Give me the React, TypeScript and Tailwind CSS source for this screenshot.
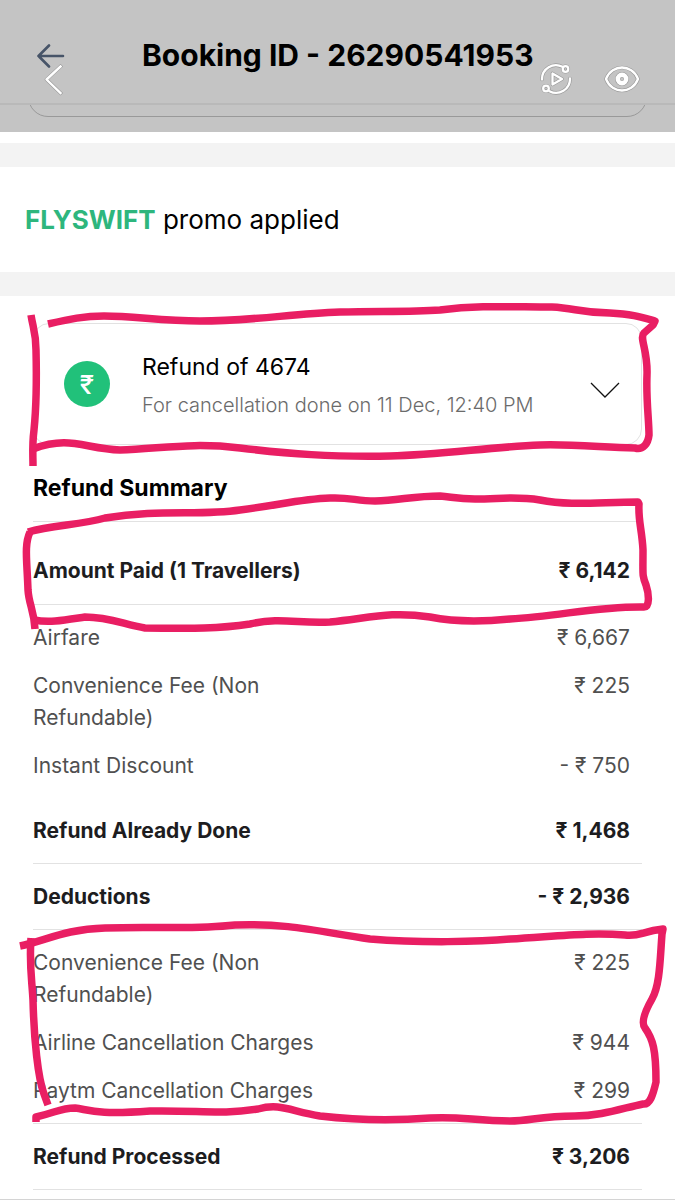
import React from "react";

type Row = { label: string; value: string; kind?: "total"; edge?: "first" | "last" };

const summaryRows: Row[] = [
  { label: "Airfare", value: "₹ 6,667", edge: "first" },
  { label: "Convenience Fee (Non Refundable)", value: "₹ 225" },
  { label: "Instant Discount", value: "- ₹ 750", edge: "last" },
  { label: "Refund Already Done", value: "₹ 1,468", kind: "total" },
  { label: "Deductions", value: "- ₹ 2,936", kind: "total" },
  { label: "Convenience Fee (Non Refundable)", value: "₹ 225", edge: "first" },
  { label: "Airline Cancellation Charges", value: "₹ 944" },
  { label: "Paytm Cancellation Charges", value: "₹ 299", edge: "last" },
];

function FeeRow({ row }: { row: Row }) {
  if (row.kind === "total") {
    return (
      <tr className="h-[66px] text-[#1d1d1f]">
        <th scope="row" className="border-b border-[#e2e2e2] text-left font-bold">{row.label}</th>
        <td className="border-b border-[#e2e2e2] pr-3 text-right font-bold">{row.value}</td>
      </tr>
    );
  }
  const pad = row.edge === "first" ? "pt-[17px] pb-2" : row.edge === "last" ? "pt-2 pb-4" : "py-2";
  return (
    <tr className="align-top text-[#505050]">
      <th scope="row" className={`w-1/2 text-left font-normal ${pad}`}>{row.label}</th>
      <td className={`pr-3 text-right ${pad}`}>{row.value}</td>
    </tr>
  );
}

function ReplayIcon() {
  const shapes = (
    <>
      <path d="M2 16.500A14 14 0 0 1 22.500 3.800" />
      <path d="M30 15.500A14 14 0 0 1 9.500 28.200" />
      <circle cx="25.500" cy="6" r="2.800" />
      <circle cx="6" cy="25.500" r="2.800" />
      <path d="M12.500 10.500V21.500L22 16Z" />
    </>
  );
  return (
    <svg viewBox="0 0 32 32" className="size-8" fill="none" strokeLinecap="round" strokeLinejoin="round" aria-hidden="true">
      <g stroke="#999" strokeWidth="3.600">{shapes}</g>
      <g stroke="#fff" strokeWidth="2.300">{shapes}</g>
    </svg>
  );
}

function EyeIcon() {
  const outline = "M2 14C5 6 12 2.500 18 2.500S31 6 34 14C31 22 24 25.500 18 25.500S5 22 2 14Z";
  return (
    <svg viewBox="0 0 36 28" className="h-7 w-9" fill="none" aria-hidden="true">
      <path d={outline} stroke="#999" strokeWidth="3.600" strokeLinejoin="round" />
      <path d={outline} stroke="#fff" strokeWidth="2.300" strokeLinejoin="round" />
      <circle cx="18" cy="14" r="4.200" stroke="#999" strokeWidth="5.400" />
      <circle cx="18" cy="14" r="4.200" stroke="#fff" strokeWidth="4.400" />
    </svg>
  );
}

function MarkerStrokes() {
  return (
    <svg
      viewBox="0 0 675 1200"
      className="pointer-events-none absolute inset-x-0 top-0 w-full"
      fill="none"
      stroke="#e91e63"
      strokeWidth="7.500"
      strokeLinejoin="round"
      aria-hidden="true"
    >
      <path d="M48 324C70 319 84 316 104 316C135 316 160 321 200 321C250 321 290 314 340 312C380 311 410 312 440 310C480 305 510 307 552 307C575 308 580 313 610 313C632 314 641 317 655 321L653 325L644 333C639 338 648 350 647 375C646 400 649 420 649 435C648 444 643 450 635 448C600 447 570 444 540 445C490 447 440 455 390 456C330 457 290 454 240 448C190 442 160 449 120 450C85 449 70 435 33 449" />
      <path d="M31 315C33 328 36 333 36 350C37 390 36 410 34 430C32 445 33 455 33 466" />
      <path d="M28 532C52 525 80 525 105 518C160 509 200 516 240 510C280 505 300 499 330 498C350 497 356 501 375 501C400 500 415 496 440 496C452 497 458 499 475 499C500 499 515 496 540 500C570 506 600 502 638 502L639 504C638 520 642 530 643 550C643 575 642 575 646 585C649 594 650 607 644 607C600 606 560 616 510 619C480 622 455 622 430 617C390 611 370 618 330 622C300 624 280 617 250 624C210 630 175 628 145 628C125 625 110 617 85 617C65 620 50 623 34 620" />
      <path d="M30 532C24 545 27 560 28 590C29 605 34 610 35 629" />
      <path d="M20 946C45 941 65 929 105 928C160 926 190 930 235 925C290 923 320 932 370 939C420 943 480 942 510 939C560 936 590 932 625 935C640 937 642 931 663 929L662 934C660 960 660 985 652 999C644 1013 641 1023 645 1028C653 1039 656 1050 656 1082C653 1095 650 1105 643 1104C620 1109 600 1116 575 1116C540 1116 530 1121 510 1121C475 1121 460 1116 430 1118C390 1121 355 1120 320 1116C290 1111 280 1103 258 1109C220 1115 200 1110 150 1111C95 1115 90 1110 75 1108C60 1108 55 1113 36 1117V1122" />
      <path d="M31 938C29 965 32 980 33 1000C34 1040 38 1078 44 1094L48 1105" />
    </svg>
  );
}

export default function App() {
  return (
    <div className="relative min-h-[1200px] overflow-hidden border-b border-[#d4d4d4] bg-white font-[Inter,sans-serif] text-black">
      <header className="bg-[#c4c4c4]">
        <div className="flex h-[105px] items-start border-b-2 border-[#b9b9b9] pr-[35px] pl-9">
          <div className="flex w-[106px] shrink-0 flex-col items-start pt-11">
            <button type="button" aria-label="Back to bookings">
              <svg viewBox="0 0 30 24" className="h-6 w-[30px]" fill="none" stroke="#475468" strokeWidth="2.600" strokeLinecap="round" strokeLinejoin="round" aria-hidden="true">
                <path d="M27 12H2.500M13 1.500L2.500 12L13 22.500" />
              </svg>
            </button>
            <button type="button" aria-label="Previous screen" className="-mt-1 ml-2">
              <svg viewBox="0 0 20 32" className="h-8 w-5" fill="none" strokeLinecap="square" strokeLinejoin="round" aria-hidden="true">
                <path d="M16.500 2.500L2.500 15.500L16.500 29" stroke="#999" strokeWidth="3.600" />
                <path d="M16.500 2.500L2.500 15.500L16.500 29" stroke="#fff" strokeWidth="2.400" />
              </svg>
            </button>
          </div>
          <h1 className="min-w-0 flex-1 pt-9 text-[30px] leading-[38px] font-bold whitespace-nowrap">Booking ID - 26290541953</h1>
          <div className="flex shrink-0 items-center gap-8 pt-[63px]">
            <button type="button" aria-label="Replay"><ReplayIcon /></button>
            <button type="button" aria-label="View"><EyeIcon /></button>
          </div>
        </div>
        <div className="h-[27px] overflow-hidden px-7">
          <div className="-mt-5 h-8 rounded-b-[20px] border border-[#999]" />
        </div>
      </header>

      <main>
        <div className="mt-[11px] h-6 bg-[#f3f3f3]" />
        <p className="flex h-[105px] items-center px-[25px] text-[26px]">
          <span><strong className="font-bold text-[#2eb67d]">FLYSWIFT</strong> promo applied</span>
        </p>
        <div className="h-6 bg-[#f3f3f3]" />

        <div className="px-[33px] pt-[27px]">
          <button type="button" className="flex h-[122px] w-full items-center rounded-2xl border border-[#e2e2e2] pr-[21px] pl-[30px] text-left">
            <span className="mr-8 flex size-[46px] shrink-0 items-center justify-center rounded-full bg-[#21c17a] text-[26px] font-medium text-white">₹</span>
            <span className="flex-1 pt-1">
              <span className="block text-[23px] leading-[38px]">Refund of 4674</span>
              <span className="block text-[20px] leading-[38px] font-light text-[#6b6b6b]">For cancellation done on 11 Dec, 12:40 PM</span>
            </span>
            <svg viewBox="0 0 30 16" className="mt-3 h-4 w-[30px]" fill="none" stroke="#111" strokeWidth="1.300" aria-hidden="true">
              <path d="M1 1L15 15L29 1" />
            </svg>
          </button>
          <h2 className="flex h-[77px] items-center border-b border-[#e2e2e2] pt-[10px] text-[23px] font-bold">Refund Summary</h2>
          <table className="w-full border-separate border-spacing-0 text-[21px] leading-8">
            <tbody>
              <tr className="h-[83px] text-[#1d1d1f]">
                <th scope="row" className="border-b border-[#e2e2e2] pt-4 text-left font-bold">Amount Paid (1 Travellers)</th>
                <td className="border-b border-[#e2e2e2] pt-4 pr-3 text-right font-bold">₹ 6,142</td>
              </tr>
              {summaryRows.map((row, i) => (
                <FeeRow key={i} row={row} />
              ))}
              <tr className="h-[67px] text-[#1d1d1f]">
                <th scope="row" className="border-y border-[#e2e2e2] text-left font-bold">Refund Processed</th>
                <td className="border-y border-[#e2e2e2] pr-3 text-right font-bold">₹ 3,206</td>
              </tr>
            </tbody>
          </table>
        </div>
      </main>
      <MarkerStrokes />
    </div>
  );
}
